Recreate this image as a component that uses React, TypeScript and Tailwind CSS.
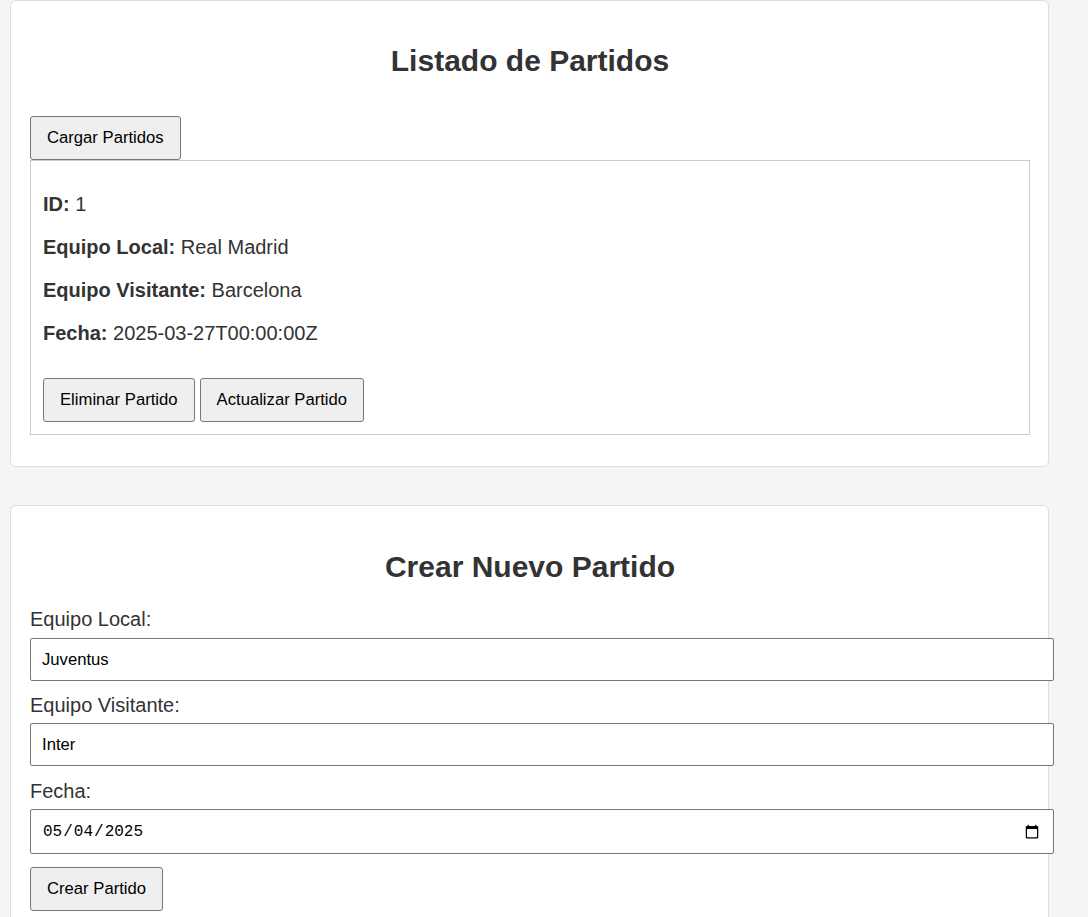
import React from "react";

const btn =
  "h-[44px] px-[16px] bg-[#efefef] border border-[#767676] rounded-[3px] text-[16.67px] text-black leading-none";

export default function App() {
  return (
    <div
      className="min-h-[917px] bg-[#f5f5f5] pl-[10px] overflow-hidden"
      style={{ fontFamily: '"Liberation Sans", Arial, sans-serif' }}
    >
      {/* Card 1 */}
      <div className="w-[1039px] bg-white border border-[#dddddd] rounded-[6px] pl-[19px] pr-[18px] pt-[19px] pb-[31px] text-[#333333]">
        <h2 className="mt-[24px] mb-[38px] text-center text-[30px] leading-[34px] font-bold">
          Listado de Partidos
        </h2>
        <button className={btn}>Cargar Partidos</button>
        <div className="w-[1000px] border border-[#cccccc] pt-[32px] pb-[12px] pl-[12px] pr-[12px]">
          <div className="flex flex-col gap-[20px] text-[20px] leading-[23px]">
            <p>
              <strong>ID:</strong> 1
            </p>
            <p>
              <strong>Equipo Local:</strong> Real Madrid
            </p>
            <p>
              <strong>Equipo Visitante:</strong> Barcelona
            </p>
            <p>
              <strong>Fecha:</strong> 2025-03-27T00:00:00Z
            </p>
          </div>
          <div className="mt-[33px] flex gap-[5px]">
            <button className={btn}>Eliminar Partido</button>
            <button className={btn}>Actualizar Partido</button>
          </div>
        </div>
      </div>

      {/* Card 2 */}
      <div className="mt-[38px] w-[1039px] bg-white border border-[#dddddd] rounded-[6px] pl-[19px] pr-[18px] pt-[19px] pb-[40px] text-[#333333] overflow-visible">
        <h2 className="mt-[25px] mb-[24px] text-center text-[30px] leading-[34px] font-bold">
          Crear Nuevo Partido
        </h2>
        <label className="block text-[20px] leading-[23px] mb-[7px]">Equipo Local:</label>
        <input
          type="text"
          defaultValue="Juventus"
          className="block w-[1024px] h-[43px] box-border px-[11px] border border-[#767676] rounded-[2px] text-[16.67px] text-black bg-white mb-[13px] outline-none"
        />
        <label className="block text-[20px] leading-[23px] mb-[6px]">Equipo Visitante:</label>
        <input
          type="text"
          defaultValue="Inter"
          className="block w-[1024px] h-[43px] box-border px-[11px] border border-[#767676] rounded-[2px] text-[16.67px] text-black bg-white mb-[14px] outline-none"
        />
        <label className="block text-[20px] leading-[23px] mb-[6px]">Fecha:</label>
        <input
          type="date"
          defaultValue="2025-05-04"
          className="block w-[1024px] h-[45px] box-border px-[11px] border border-[#767676] rounded-[2px] text-[16px] text-black bg-white mb-[13px] outline-none"
          style={{ fontFamily: '"Liberation Mono", "DejaVu Sans Mono", monospace' }}
        />
        <button className={btn}>Crear Partido</button>
      </div>
    </div>
  );
}
